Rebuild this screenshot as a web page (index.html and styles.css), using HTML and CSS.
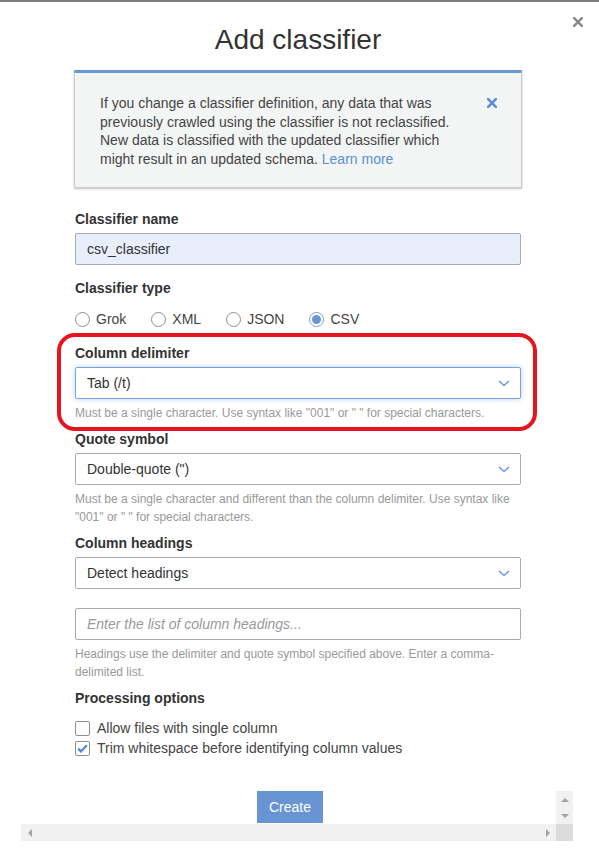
FILE: index.html
```html
<!DOCTYPE html>
<html lang="en">
<head>
<meta charset="utf-8">
<title>Add classifier</title>
<link rel="stylesheet" href="styles.css">
</head>
<body>
<div class="topline"></div>
<button class="modal-close" aria-label="Close">
  <svg width="10" height="10" viewBox="0 0 10 10"><path d="M1.2 1.2 L8.8 8.8 M8.8 1.2 L1.2 8.8" stroke="#8a8a8a" stroke-width="2.6" stroke-linecap="square"/></svg>
</button>
<div class="modal">
  <h1 class="title">Add classifier</h1>

  <div class="alert">
    <p class="alert-text">If you change a classifier definition, any data that was previously crawled using the classifier is not reclassified. New data is classified with the updated classifier which might result in an updated schema. <a href="#" class="link">Learn more</a></p>
    <span class="alert-close">
      <svg width="10" height="10" viewBox="0 0 10 10"><path d="M1.2 1.2 L8.8 8.8 M8.8 1.2 L1.2 8.8" stroke="#5b8fd9" stroke-width="2.6" stroke-linecap="square"/></svg>
    </span>
  </div>

  <div class="field field-first">
    <div class="label">Classifier name</div>
    <div class="input input-filled">csv_classifier</div>
  </div>

  <div class="field">
    <div class="label">Classifier type</div>
    <div class="radios">
      <span class="radio-item"><span class="radio"></span>Grok</span>
      <span class="radio-item"><span class="radio"></span>XML</span>
      <span class="radio-item"><span class="radio"></span>JSON</span>
      <span class="radio-item"><span class="radio radio-on"></span>CSV</span>
    </div>
  </div>

  <div class="field field-highlight">
    <div class="label">Column delimiter</div>
    <div class="select select-focus">
      <span>Tab (/t)</span>
      <svg class="chev" width="12" height="7" viewBox="0 0 12 7"><path d="M1 1 L6 5.5 L11 1" fill="none" stroke="#6a96d6" stroke-width="1.4"/></svg>
    </div>
    <div class="help">Must be a single character. Use syntax like "001" or " " for special characters.</div>
  </div>

  <div class="field field-tight">
    <div class="label">Quote symbol</div>
    <div class="select">
      <span>Double-quote (")</span>
      <svg class="chev" width="12" height="7" viewBox="0 0 12 7"><path d="M1 1 L6 5.5 L11 1" fill="none" stroke="#6a96d6" stroke-width="1.4"/></svg>
    </div>
    <div class="help">Must be a single character and different than the column delimiter. Use syntax like "001" or " " for special characters.</div>
  </div>

  <div class="field field-tight">
    <div class="label">Column headings</div>
    <div class="select">
      <span>Detect headings</span>
      <svg class="chev" width="12" height="7" viewBox="0 0 12 7"><path d="M1 1 L6 5.5 L11 1" fill="none" stroke="#6a96d6" stroke-width="1.4"/></svg>
    </div>
    <div class="input input-placeholder">Enter the list of column headings...</div>
    <div class="help">Headings use the delimiter and quote symbol specified above. Enter a comma-delimited list.</div>
  </div>

  <div class="field field-tight">
    <div class="label">Processing options</div>
    <div class="checks">
      <div class="check-item"><span class="check"></span>Allow files with single column</div>
      <div class="check-item"><span class="check check-on"><svg width="11" height="9" viewBox="0 0 11 9"><path d="M1.2 4.6 L4 7.4 L9.8 1.2" fill="none" stroke="#4f86d6" stroke-width="2.2"/></svg></span>Trim whitespace before identifying column values</div>
    </div>
  </div>
</div>

<div class="actions">
  <button class="btn-primary">Create</button>
</div>

<div class="scrollbars" aria-hidden="true">
  <div class="vtrack"><span class="tri tri-up"></span><span class="tri tri-down"></span></div>
  <div class="htrack"><span class="tri tri-left"></span><span class="tri tri-right"></span></div>
  <div class="corner"></div>
</div>
</body>
</html>
```
FILE: styles.css
```css
html, body {
  margin: 0;
  padding: 0;
}
body {
  width: 599px;
  height: 854px;
  overflow: hidden;
  position: relative;
  background: #fff;
  font-family: "Liberation Sans", Arial, sans-serif;
  font-size: 14px;
  color: #333;
}
.topline {
  height: 2px;
  background: #7d7d7d;
}
.modal-close {
  position: absolute;
  left: 573px;
  top: 17px;
  width: 10px;
  height: 10px;
  padding: 0;
  border: 0;
  background: none;
  display: flex;
}
.modal {
  padding: 0 78px 0 75px;
}
.title {
  margin: 22px 0 14px;
  font-size: 28px;
  line-height: 32px;
  font-weight: normal;
  text-align: center;
  color: #333;
}
.alert {
  margin: 0 -1px;
  height: 118px;
  box-sizing: border-box;
  background: #f3f5f5;
  border: 1px solid #c9cccc;
  border-top: 3px solid #6a96d6;
  box-shadow: 0 1px 2px rgba(0,0,0,0.25);
  display: flex;
  align-items: flex-start;
  padding: 21px 24px 0 25px;
}
.alert-text {
  margin: 0;
  width: 362px;
  line-height: 18.5px;
  color: #444;
}
.link {
  color: #5b8fd6;
  text-decoration: none;
}
.alert-close {
  margin-left: auto;
  margin-top: 4px;
  display: flex;
}
.field {
  margin-top: 13px;
}
.field-first {
  margin-top: 21px;
}
.field-highlight {
  margin-top: 14px;
}
.field-tight {
  margin-top: 7px;
}
.label {
  font-weight: bold;
  line-height: 20px;
  margin-bottom: 4px;
  color: #333;
}
.input, .select {
  height: 32px;
  box-sizing: border-box;
  border: 1px solid #aaa;
  border-radius: 2px;
  padding: 0 11px;
  display: flex;
  align-items: center;
  color: #333;
}
.input-filled {
  background: #e8eefb;
}
.input-placeholder {
  margin-top: 19px;
  font-style: italic;
  color: #999;
}
.select {
  justify-content: space-between;
  padding-right: 10px;
}
.select-focus {
  border-color: #7aa2dc;
  box-shadow: 0 0 5px rgba(106,150,214,0.45);
}
.chev {
  display: block;
}
.help {
  margin-top: 5px;
  font-size: 12px;
  line-height: 18px;
  color: #999;
}
.radios {
  display: flex;
  gap: 25px;
  height: 20px;
  margin-top: 11px;
  align-items: center;
}
.radio-item {
  display: flex;
  align-items: center;
  color: #444;
}
.radio {
  width: 15px;
  height: 15px;
  box-sizing: border-box;
  border: 1px solid #8f8f8f;
  border-radius: 50%;
  margin-right: 6px;
  display: flex;
  align-items: center;
  justify-content: center;
  background: #fff;
}
.radio-on {
  border-color: #7b9fd6;
}
.radio-on::after {
  content: "";
  width: 9px;
  height: 9px;
  border-radius: 50%;
  background: #6a96d6;
}
.field-highlight {
  position: relative;
}
.field-highlight::before {
  content: "";
  position: absolute;
  left: -18px;
  right: -16px;
  top: -10px;
  bottom: -9px;
  border: 4px solid #e5141f;
  border-radius: 18px;
  pointer-events: none;
}
.checks {
  margin-top: 10px;
}
.check-item {
  display: flex;
  align-items: center;
  height: 20px;
  color: #444;
}
.check {
  width: 15px;
  height: 15px;
  box-sizing: border-box;
  border: 1px solid #8f8f8f;
  border-radius: 2px;
  margin-right: 7px;
  display: flex;
  align-items: center;
  justify-content: center;
  background: #fff;
}
.actions {
  margin-top: 33px;
  padding-left: 257px;
  display: flex;
}
.btn-primary {
  height: 32px;
  padding: 0 12px;
  border: 0;
  border-radius: 0;
  background: #6894d4;
  color: #fff;
  font-family: "Liberation Sans", Arial, sans-serif;
  font-size: 14px;
}
.scrollbars {
  position: absolute;
  left: 21px;
  top: 791px;
  width: 552px;
  height: 50px;
  display: grid;
  grid-template-columns: 535px 17px;
  grid-template-rows: 33px 17px;
}
.vtrack {
  grid-column: 2;
  grid-row: 1;
  background: #f1f1f1;
  display: flex;
  flex-direction: column;
  align-items: center;
  justify-content: space-between;
  padding: 7px 0 6px;
}
.htrack {
  grid-column: 1;
  grid-row: 2;
  background: #f1f1f1;
  display: flex;
  align-items: center;
  justify-content: space-between;
  padding: 0 6px 0 7px;
}
.corner {
  grid-column: 2;
  grid-row: 2;
  background: #dcdcdc;
}
.tri {
  width: 0;
  height: 0;
  display: block;
}
.tri-up {
  border-left: 4px solid transparent;
  border-right: 4px solid transparent;
  border-bottom: 4px solid #a3a3a3;
}
.tri-down {
  border-left: 4px solid transparent;
  border-right: 4px solid transparent;
  border-top: 4px solid #a3a3a3;
}
.tri-left {
  border-top: 4px solid transparent;
  border-bottom: 4px solid transparent;
  border-right: 4px solid #a3a3a3;
}
.tri-right {
  border-top: 4px solid transparent;
  border-bottom: 4px solid transparent;
  border-left: 4px solid #a3a3a3;
}
```
